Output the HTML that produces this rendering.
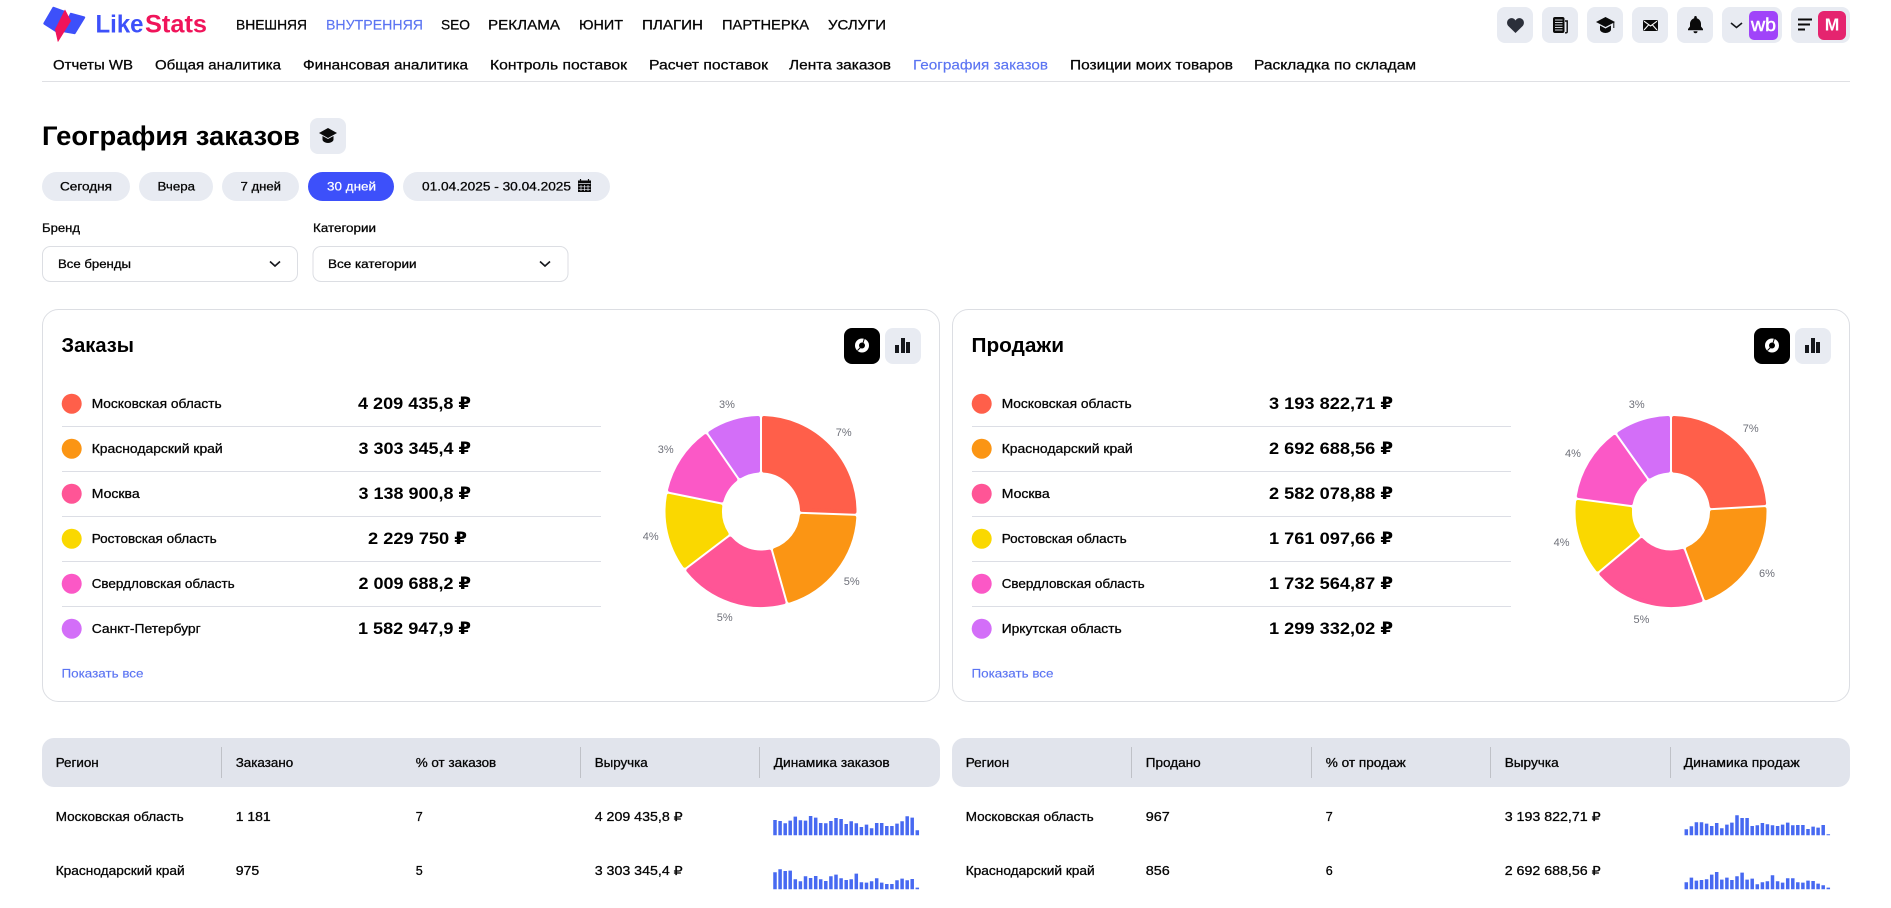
<!DOCTYPE html>
<html lang="ru"><head><meta charset="utf-8"><title>География заказов</title>
<style>
html,body{margin:0;padding:0;background:#fff;width:1891px;height:908px;overflow:hidden}
svg{display:block;font-family:"Liberation Sans","DejaVu Sans",sans-serif}
.m{fill:#050505;stroke:#050505;stroke-width:.28px}
.b{font-weight:700;fill:#000}
.n{font-size:14px}.s{font-size:12px}.r{font-size:12.5px}.a{font-size:16.5px}
.l{fill:#5b74f2;stroke:#5b74f2;stroke-width:.15px}
.p{font-size:11px;fill:#6e7079;text-anchor:middle}
.sp{fill:none;stroke:#4769f1;stroke-width:3.5}
.bt{fill:#e8ebf2}
</style></head><body>
<svg width="1891" height="908" viewBox="0 0 1891 908" xmlns="http://www.w3.org/2000/svg">
<!-- logo -->
<g stroke-linejoin="round">
<path d="M53.5 8 L44.5 23.5 L57 31.500 L64.5 12 Z" fill="#3d50fa" stroke="#3d50fa" stroke-width="2.4"/>
<path d="M71 14 L84 17.5 L74.5 33 L63 31 Z" fill="#3d50fa" stroke="#3d50fa" stroke-width="2.4"/>
<path d="M65 10 L70.7 21 L58 41.5 L55.3 29.5 Z" fill="#f0145a" stroke="#f0145a" stroke-width=".6"/>
</g>
<text x="95.500" y="32.7" font-size="25" font-weight="700" fill="#3d50fa" textLength="48" lengthAdjust="spacingAndGlyphs">Like</text>
<text x="145" y="32.7" font-size="25" font-weight="700" fill="#f0145a" textLength="62" lengthAdjust="spacingAndGlyphs">Stats</text>
<!-- top nav -->
<g class="n" transform="translate(0 -.4)">
<text class="m" x="236" y="30" textLength="71" lengthAdjust="spacingAndGlyphs">ВНЕШНЯЯ</text>
<text class="l" x="326" y="30" textLength="97" lengthAdjust="spacingAndGlyphs">ВНУТРЕННЯЯ</text>
<text class="m" x="441" y="30" textLength="29" lengthAdjust="spacingAndGlyphs">SEO</text>
<text class="m" x="488" y="30" textLength="72" lengthAdjust="spacingAndGlyphs">РЕКЛАМА</text>
<text class="m" x="579" y="30" textLength="44" lengthAdjust="spacingAndGlyphs">ЮНИТ</text>
<text class="m" x="642" y="30" textLength="61" lengthAdjust="spacingAndGlyphs">ПЛАГИН</text>
<text class="m" x="722" y="30" textLength="87" lengthAdjust="spacingAndGlyphs">ПАРТНЕРКА</text>
<text class="m" x="828" y="30" textLength="58" lengthAdjust="spacingAndGlyphs">УСЛУГИ</text>
<text class="m" x="53" y="70" textLength="80" lengthAdjust="spacingAndGlyphs">Отчеты WB</text>
<text class="m" x="155" y="70" textLength="126" lengthAdjust="spacingAndGlyphs">Общая аналитика</text>
<text class="m" x="303" y="70" textLength="165" lengthAdjust="spacingAndGlyphs">Финансовая аналитика</text>
<text class="m" x="490" y="70" textLength="137" lengthAdjust="spacingAndGlyphs">Контроль поставок</text>
<text class="m" x="649" y="70" textLength="119" lengthAdjust="spacingAndGlyphs">Расчет поставок</text>
<text class="m" x="789" y="70" textLength="102" lengthAdjust="spacingAndGlyphs">Лента заказов</text>
<text class="l" x="913" y="70" textLength="135" lengthAdjust="spacingAndGlyphs">География заказов</text>
<text class="m" x="1070" y="70" textLength="163" lengthAdjust="spacingAndGlyphs">Позиции моих товаров</text>
<text class="m" x="1254" y="70" textLength="162" lengthAdjust="spacingAndGlyphs">Раскладка по складам</text>
</g>
<rect x="42" y="81" width="1808" height="1" fill="#dfe0e4"/>
<!-- top right buttons -->
<rect class="bt" x="1497" y="7" width="36" height="36" rx="8"/>
<rect class="bt" x="1542" y="7" width="36" height="36" rx="8"/>
<rect class="bt" x="1587" y="7" width="36" height="36" rx="8"/>
<rect class="bt" x="1632" y="7" width="36" height="36" rx="8"/>
<rect class="bt" x="1677" y="7" width="36" height="36" rx="8"/>
<rect class="bt" x="1722" y="7" width="60" height="36" rx="8"/>
<rect class="bt" x="1791" y="7" width="59" height="36" rx="8"/>
<path transform="translate(1507 18)" fill="#2b2f3a" d="M8.5 15 L1.3 8 C-1 5.5 0 1.2 3.5.3 C5.5 -.2 7.5.7 8.5 2.5 C9.5.7 11.5-.2 13.5.3 C17 1.2 18 5.5 15.7 8 Z"/>
<rect x="1553" y="17" width="11.5" height="16" rx="2" fill="#0a0a0a"/>
<path d="M1555 20h7.5M1555 22.5h7.5M1555 25h7.5M1555 27.5h7.5M1555 30h7.5" stroke="#cfd2d8" stroke-width="1.1"/>
<path d="M1565 21h2.2v10.800q0 1-1 1h-1.2" fill="none" stroke="#0a0a0a" stroke-width="1.4"/>
<g fill="#0a0a0a"><path d="M1596 22 L1605.5 17 L1615 22 L1605.5 27 Z"/><path d="M1600 25.5v4c0 2 3 3.5 5.5 3.5s5.5-1.5 5.5-3.5v-4L1605.5 28.500 Z"/><path d="M1613.8 22.5v5.5" stroke="#0a0a0a" stroke-width="1"/></g>
<rect x="1643" y="20" width="15" height="11" rx="1.5" fill="#0a0a0a"/>
<path d="M1644 21.2 L1650.5 26 L1657 21.2 M1644 30 L1648.5 25 M1657 30 L1652.5 25" fill="none" stroke="#fff" stroke-width="1.1"/>
<path fill="#0a0a0a" d="M1695.5 16c-.8 0-1.3.6-1.3 1.3v.9C1691.5 19 1690 21.3 1690 24v2.5L1688 29v1.2h15V29L1701 26.5V24c0-2.7-1.5-5-4.2-5.8v-.9c0-.7-.5-1.3-1.3-1.3ZM1693.500 31.200a2 2 0 0 0 4 0Z"/>
<path d="M1731 23 L1736.5 27.5 L1742 23" fill="none" stroke="#15171c" stroke-width="1.6"/>
<rect x="1749" y="11" width="29" height="29" rx="5" fill="#a044f9"/>
<text x="1763.5" y="31" font-size="18" fill="#fff" stroke="#fff" stroke-width=".5" text-anchor="middle" textLength="25" lengthAdjust="spacingAndGlyphs">wb</text>
<path d="M1798 19.5h14M1798 24.5h12M1798 29.5h7" stroke="#0a0a0a" stroke-width="2.1"/>
<rect x="1818" y="11" width="28" height="29" rx="6" fill="#e5246f"/>
<text x="1832" y="30.5" font-size="17.5" font-weight="700" fill="#fff" text-anchor="middle">M</text>
<!-- heading -->
<text class="b" x="42" y="145" font-size="26.5" textLength="258" lengthAdjust="spacingAndGlyphs">География заказов</text>
<rect class="bt" x="310" y="118" width="36" height="36" rx="8"/>
<g fill="#0a0a0a"><path d="M319 133 L328 128 L337 133 L328 138 Z"/><path d="M322.5 136v3.500c0 2 3 3.500 5.500 3.500s5.500-1.500 5.500-3.500V136L328 139 Z"/></g>
<!-- pills -->
<rect class="bt" x="42" y="172" width="88" height="29" rx="14.5"/>
<rect class="bt" x="139" y="172" width="74" height="29" rx="14.5"/>
<rect class="bt" x="222" y="172" width="77" height="29" rx="14.5"/>
<rect x="308" y="172" width="86" height="29" rx="14.5" fill="#3d50fa"/>
<rect class="bt" x="403" y="172" width="207" height="29" rx="14.5"/>
<g class="s">
<text class="m" x="60" y="190.5" textLength="52" lengthAdjust="spacingAndGlyphs">Сегодня</text>
<text class="m" x="157.5" y="190.5" textLength="37.5" lengthAdjust="spacingAndGlyphs">Вчера</text>
<text class="m" x="240.5" y="190.5" textLength="40.5" lengthAdjust="spacingAndGlyphs">7 дней</text>
<text x="327" y="190.5" fill="#fff" stroke="#fff" stroke-width=".22" textLength="49" lengthAdjust="spacingAndGlyphs">30 дней</text>
<text class="m" x="422" y="190.5" textLength="149" lengthAdjust="spacingAndGlyphs">01.04.2025 - 30.04.2025</text>
</g>
<path d="M578 180.5h13v11.500h-13z" fill="#0a0a0a"/>
<path d="M580.5 179v2M588.5 179v2" stroke="#0a0a0a" stroke-width="1.2"/>
<path d="M578.5 183.5h12M581 185v6M584.5 185v6M588 185v6M578.5 186.8h12M578.5 189.3h12" stroke="#e8ebf2" stroke-width=".7"/>
<!-- filters -->
<rect x="42.5" y="246.5" width="255" height="35" rx="8" fill="#fff" stroke="#dcdee3"/>
<rect x="313" y="246.5" width="255" height="35" rx="8" fill="#fff" stroke="#dcdee3"/>
<g class="s" transform="translate(0 -.5)">
<text class="m" x="42" y="232.5" textLength="38" lengthAdjust="spacingAndGlyphs">Бренд</text>
<text class="m" x="313" y="232.5" textLength="63" lengthAdjust="spacingAndGlyphs">Категории</text>
<text class="m" x="58" y="268.5" textLength="73" lengthAdjust="spacingAndGlyphs">Все бренды</text>
<text class="m" x="328" y="268.5" textLength="88.5" lengthAdjust="spacingAndGlyphs">Все категории</text>
</g>
<path d="M270 261.5 L275 266 L280 261.5" fill="none" stroke="#15171c" stroke-width="1.6"/>
<path d="M540 261.5 L545 266 L550 261.5" fill="none" stroke="#15171c" stroke-width="1.6"/>
<!-- cards -->
<rect x="42.5" y="309.5" width="897" height="392" rx="16" fill="#fff" stroke="#dcdee3"/>
<rect x="952.5" y="309.5" width="897" height="392" rx="16" fill="#fff" stroke="#dcdee3"/>
<text class="b" x="61.5" y="352" font-size="20" textLength="72.5" lengthAdjust="spacingAndGlyphs">Заказы</text>
<text class="b" x="971.5" y="352" font-size="20" textLength="92.5" lengthAdjust="spacingAndGlyphs">Продажи</text>
<!-- toggles -->
<rect x="844" y="328" width="36" height="36" rx="8" fill="#000"/>
<rect class="bt" x="885" y="328" width="36" height="36" rx="8"/>
<circle cx="862" cy="345.5" r="5" fill="none" stroke="#fff" stroke-width="4"/>
<path d="M863 343 L864.500 338 M860.500 347.500 L857.500 350.500" stroke="#000" stroke-width="1"/>
<path d="M895 345h4v8h-4zM901 338h4v15h-4zM906 342h4v11h-4z" fill="#15171c"/>
<rect x="1754" y="328" width="36" height="36" rx="8" fill="#000"/>
<rect class="bt" x="1795" y="328" width="36" height="36" rx="8"/>
<circle cx="1772" cy="345.5" r="5" fill="none" stroke="#fff" stroke-width="4"/>
<path d="M1773 343 L1774.500 338 M1770.500 347.500 L1767.500 350.500" stroke="#000" stroke-width="1"/>
<path d="M1805 345h4v8h-4zM1811 338h4v15h-4zM1816 342h4v11h-4z" fill="#15171c"/>
<!-- left list -->
<g>
<g transform="translate(-.3 -.3)"><circle cx="72" cy="404" r="10" fill="#ff5f4a"/><circle cx="72" cy="449" r="10" fill="#fb9514"/><circle cx="72" cy="494" r="10" fill="#ff5596"/><circle cx="72" cy="539" r="10" fill="#fad800"/><circle cx="72" cy="584" r="10" fill="#fb58c6"/><circle cx="72" cy="629" r="10" fill="#d36ef8"/></g>
<path d="M62 426.500h539M62 471.500h539M62 516.500h539M62 561.500h539M62 606.500h539" stroke="#dcdee5"/>
<g class="r" transform="translate(-.3 -.6)">
<text class="m" x="92" y="408.5" textLength="130" lengthAdjust="spacingAndGlyphs">Московская область</text>
<text class="m" x="92" y="453.5" textLength="131" lengthAdjust="spacingAndGlyphs">Краснодарский край</text>
<text class="m" x="92" y="498.5" textLength="48" lengthAdjust="spacingAndGlyphs">Москва</text>
<text class="m" x="92" y="543.5" textLength="125" lengthAdjust="spacingAndGlyphs">Ростовская область</text>
<text class="m" x="92" y="588.5" textLength="143" lengthAdjust="spacingAndGlyphs">Свердловская область</text>
<text class="m" x="92" y="633.5" textLength="109" lengthAdjust="spacingAndGlyphs">Санкт-Петербург</text>
</g>
<g class="a b" transform="translate(0 -.5)">
<text x="358" y="409.3" textLength="113" lengthAdjust="spacingAndGlyphs">4 209 435,8 ₽</text>
<text x="358.5" y="454.3" textLength="112.5" lengthAdjust="spacingAndGlyphs">3 303 345,4 ₽</text>
<text x="358.5" y="499.3" textLength="112.5" lengthAdjust="spacingAndGlyphs">3 138 900,8 ₽</text>
<text x="368" y="544.3" textLength="99" lengthAdjust="spacingAndGlyphs">2 229 750 ₽</text>
<text x="358.5" y="589.3" textLength="112.5" lengthAdjust="spacingAndGlyphs">2 009 688,2 ₽</text>
<text x="358" y="634.3" textLength="113" lengthAdjust="spacingAndGlyphs">1 582 947,9 ₽</text>
</g>
<text class="s l" x="61.5" y="677.5" textLength="82" lengthAdjust="spacingAndGlyphs">Показать все</text>
</g>
<!-- right list -->
<g>
<g transform="translate(-.3 -.3)"><circle cx="982" cy="404" r="10" fill="#ff5f4a"/><circle cx="982" cy="449" r="10" fill="#fb9514"/><circle cx="982" cy="494" r="10" fill="#ff5596"/><circle cx="982" cy="539" r="10" fill="#fad800"/><circle cx="982" cy="584" r="10" fill="#fb58c6"/><circle cx="982" cy="629" r="10" fill="#d36ef8"/></g>
<path d="M972 426.500h539M972 471.500h539M972 516.500h539M972 561.500h539M972 606.500h539" stroke="#dcdee5"/>
<g class="r" transform="translate(-.3 -.6)">
<text class="m" x="1002" y="408.5" textLength="130" lengthAdjust="spacingAndGlyphs">Московская область</text>
<text class="m" x="1002" y="453.5" textLength="131" lengthAdjust="spacingAndGlyphs">Краснодарский край</text>
<text class="m" x="1002" y="498.5" textLength="48" lengthAdjust="spacingAndGlyphs">Москва</text>
<text class="m" x="1002" y="543.5" textLength="125" lengthAdjust="spacingAndGlyphs">Ростовская область</text>
<text class="m" x="1002" y="588.5" textLength="143" lengthAdjust="spacingAndGlyphs">Свердловская область</text>
<text class="m" x="1002" y="633.5" textLength="120" lengthAdjust="spacingAndGlyphs">Иркутская область</text>
</g>
<g class="a b" transform="translate(0 -.5)">
<text x="1269" y="409.3" textLength="124" lengthAdjust="spacingAndGlyphs">3 193 822,71 ₽</text>
<text x="1269" y="454.3" textLength="124" lengthAdjust="spacingAndGlyphs">2 692 688,56 ₽</text>
<text x="1269" y="499.3" textLength="124" lengthAdjust="spacingAndGlyphs">2 582 078,88 ₽</text>
<text x="1269" y="544.3" textLength="124" lengthAdjust="spacingAndGlyphs">1 761 097,66 ₽</text>
<text x="1269" y="589.3" textLength="124" lengthAdjust="spacingAndGlyphs">1 732 564,87 ₽</text>
<text x="1269" y="634.3" textLength="124" lengthAdjust="spacingAndGlyphs">1 299 332,02 ₽</text>
</g>
<text class="s l" x="971.5" y="677.5" textLength="82" lengthAdjust="spacingAndGlyphs">Показать все</text>
</g>
<!-- donut 1 -->
<g transform="translate(761 511.500)" stroke-width="4" stroke-linejoin="round">
<path fill="#ff5f4a" stroke="#ff5f4a" d="M3,-93.45A93.5,93.5 0 0 1 93.49,.26L40.98,-1.57A41,41 0 0 0 3,-40.9Z"/>
<path fill="#fb9514" stroke="#fb9514" d="M93.29,6.26A93.5,93.5 0 0 1 28.34,89.1L14.03,38.53A41,41 0 0 0 40.78,4.43Z"/>
<path fill="#ff5596" stroke="#ff5596" d="M22.56,90.74A93.5,93.5 0 0 1 -72.62,58.89L-30.77,27.12A41,41 0 0 0 8.25,40.17Z"/>
<path fill="#fad800" stroke="#fad800" d="M-76.24,54.11A93.5,93.5 0 0 1 -92.17,-15.69L-40.68,-5.22A41,41 0 0 0 -34.39,22.34Z"/>
<path fill="#fb58c6" stroke="#fb58c6" d="M-90.97,-21.57A93.5,93.5 0 0 1 -55.53,-75.22L-25.69,-31.96A41,41 0 0 0 -39.48,-11.1Z"/>
<path fill="#d36ef8" stroke="#d36ef8" d="M-50.59,-78.62A93.5,93.5 0 0 1 -3,-93.45L-3,-40.9A41,41 0 0 0 -20.75,-35.36Z"/>
</g>
<text class="p" x="727" y="408">3%</text>
<text class="p" x="843.7" y="436">7%</text>
<text class="p" x="665.7" y="453">3%</text>
<text class="p" x="650.7" y="540">4%</text>
<text class="p" x="851.7" y="585">5%</text>
<text class="p" x="724.7" y="621">5%</text>
<!-- donut 2 -->
<g transform="translate(1671 511.500)" stroke-width="4" stroke-linejoin="round">
<path fill="#ff5f4a" stroke="#ff5f4a" d="M3,-93.45A93.5,93.5 0 0 1 93.12,-8.37L40.66,-5.35A41,41 0 0 0 3,-40.9Z"/>
<path fill="#fb9514" stroke="#fb9514" d="M93.46,-2.39A93.5,93.5 0 0 1 35.09,86.66L16.94,37.34A41,41 0 0 0 41,.63Z"/>
<path fill="#ff5596" stroke="#ff5596" d="M29.45,88.74A93.5,93.5 0 0 1 -69.55,62.48L-29.35,28.63A41,41 0 0 0 11.3,39.42Z"/>
<path fill="#fad800" stroke="#fad800" d="M-73.41,57.9A93.5,93.5 0 0 1 -93.01,-9.55L-40.93,-2.51A41,41 0 0 0 -33.21,24.05Z"/>
<path fill="#fb58c6" stroke="#fb58c6" d="M-92.21,-15.49A93.5,93.5 0 0 1 -56.45,-74.53L-26.09,-31.65A41,41 0 0 0 -40.13,-8.45Z"/>
<path fill="#d36ef8" stroke="#d36ef8" d="M-51.55,-77.99A93.5,93.5 0 0 1 -3,-93.45L-3,-40.9A41,41 0 0 0 -21.19,-35.11Z"/>
</g>
<text class="p" x="1636.7" y="408">3%</text>
<text class="p" x="1750.7" y="432">7%</text>
<text class="p" x="1573" y="457">4%</text>
<text class="p" x="1561.6" y="546">4%</text>
<text class="p" x="1767" y="577">6%</text>
<text class="p" x="1641.5" y="623">5%</text>
<!-- table 1 -->
<rect x="42" y="738" width="898" height="49" rx="12" fill="#e1e4ec"/>
<path d="M221.5 747v31M580.5 747v31M759.5 747v31" stroke="#bfc1c7"/>
<g class="r" transform="translate(-.3 -.5)">
<text class="m" x="56" y="767.5" textLength="43" lengthAdjust="spacingAndGlyphs">Регион</text>
<text class="m" x="236" y="767.5" textLength="57.5" lengthAdjust="spacingAndGlyphs">Заказано</text>
<text class="m" x="416" y="767.5" textLength="80.5" lengthAdjust="spacingAndGlyphs">% от заказов</text>
<text class="m" x="595" y="767.5" textLength="53" lengthAdjust="spacingAndGlyphs">Выручка</text>
<text class="m" x="774" y="767.5" textLength="116" lengthAdjust="spacingAndGlyphs">Динамика заказов</text>
<text class="m" x="56" y="821.5" textLength="128" lengthAdjust="spacingAndGlyphs">Московская область</text>
<text class="m" x="236" y="821.5" textLength="35" lengthAdjust="spacingAndGlyphs">1 181</text>
<text class="m" x="416" y="821.5">7</text>
<text class="m" x="595" y="821.5" textLength="88" lengthAdjust="spacingAndGlyphs">4 209 435,8 ₽</text>
<text class="m" x="56" y="875.5" textLength="129" lengthAdjust="spacingAndGlyphs">Краснодарский край</text>
<text class="m" x="236" y="875.5" textLength="23.5" lengthAdjust="spacingAndGlyphs">975</text>
<text class="m" x="416" y="875.5">5</text>
<text class="m" x="595" y="875.5" textLength="88" lengthAdjust="spacingAndGlyphs">3 303 345,4 ₽</text>
</g>
<path class="sp" d="M775 835.3v-15.3M780.1 835.3v-14.3M785.2 835.3v-12M790.2 835.3v-14.7M795.3 835.3v-18.7M800.4 835.3v-15M805.5 835.3v-14.7M810.6 835.3v-19.3M815.7 835.3v-17.7M820.7 835.3v-12.3M825.8 835.3v-12M830.9 835.3v-14.3M836 835.3v-17.3M841.1 835.3v-16.3M846.2 835.3v-11.3M851.2 835.3v-14M856.3 835.3v-12M861.4 835.3v-8.3M866.5 835.3v-10.7M871.6 835.3v-7M876.7 835.3v-12.3M881.7 835.3v-12.3M886.8 835.3v-9.3M891.9 835.3v-9.3M897 835.3v-11.7M902.1 835.3v-14M907.2 835.3v-19M912.2 835.3v-17.7M917.3 835.3v-5"/>
<path class="sp" d="M775 889.3v-17M780.1 889.3v-20M785.2 889.3v-18.3M790.2 889.3v-18.7M795.3 889.3v-10M800.4 889.3v-8M805.5 889.3v-13M810.6 889.3v-11.3M815.7 889.3v-13.3M820.7 889.3v-10M825.8 889.3v-8.3M830.9 889.3v-13M836 889.3v-14.7M841.1 889.3v-11M846.2 889.3v-9.3M851.2 889.3v-10M856.3 889.3v-15.7M861.4 889.3v-7M866.5 889.3v-6.7M871.6 889.3v-8M876.7 889.3v-11M881.7 889.3v-6.7M886.8 889.3v-5.3M891.9 889.3v-5.3M897 889.3v-9M902.1 889.3v-10.7M907.2 889.3v-9M912.2 889.3v-10.3M917.3 889.3v-1.7"/>
<!-- table 2 -->
<rect x="952" y="738" width="898" height="49" rx="12" fill="#e1e4ec"/>
<path d="M1131.5 747v31M1311.5 747v31M1490.5 747v31M1670.5 747v31" stroke="#bfc1c7"/>
<g class="r" transform="translate(-.3 -.5)">
<text class="m" x="966" y="767.5" textLength="43.5" lengthAdjust="spacingAndGlyphs">Регион</text>
<text class="m" x="1146" y="767.5" textLength="55" lengthAdjust="spacingAndGlyphs">Продано</text>
<text class="m" x="1326" y="767.5" textLength="80" lengthAdjust="spacingAndGlyphs">% от продаж</text>
<text class="m" x="1505" y="767.5" textLength="54" lengthAdjust="spacingAndGlyphs">Выручка</text>
<text class="m" x="1684" y="767.5" textLength="116" lengthAdjust="spacingAndGlyphs">Динамика продаж</text>
<text class="m" x="966" y="821.5" textLength="128" lengthAdjust="spacingAndGlyphs">Московская область</text>
<text class="m" x="1146" y="821.5" textLength="24" lengthAdjust="spacingAndGlyphs">967</text>
<text class="m" x="1326" y="821.5">7</text>
<text class="m" x="1505" y="821.5" textLength="96" lengthAdjust="spacingAndGlyphs">3 193 822,71 ₽</text>
<text class="m" x="966" y="875.5" textLength="129" lengthAdjust="spacingAndGlyphs">Краснодарский край</text>
<text class="m" x="1146" y="875.5" textLength="24" lengthAdjust="spacingAndGlyphs">856</text>
<text class="m" x="1326" y="875.5">6</text>
<text class="m" x="1505" y="875.5" textLength="96" lengthAdjust="spacingAndGlyphs">2 692 688,56 ₽</text>
</g>
<path class="sp" d="M1686.3 835.3v-6M1691.4 835.3v-9M1696.4 835.3v-13M1701.5 835.3v-13M1706.6 835.3v-11.7M1711.7 835.3v-9.3M1716.7 835.3v-12.3M1721.8 835.3v-7M1726.9 835.3v-10.7M1731.9 835.3v-12.7M1737 835.3v-20M1742.1 835.3v-17.3M1747.1 835.3v-17.3M1752.2 835.3v-9.3M1757.3 835.3v-10M1762.4 835.3v-12.3M1767.4 835.3v-11M1772.5 835.3v-10M1777.6 835.3v-9.3M1782.6 835.3v-10.7M1787.7 835.3v-12.7M1792.8 835.3v-10M1797.8 835.3v-10.3M1802.9 835.3v-10.3M1808 835.3v-6.3M1813.1 835.3v-8.7M1818.1 835.3v-7.7M1823.2 835.3v-10.3M1828.3 835.3v-1"/>
<path class="sp" d="M1686.3 889.3v-7M1691.4 889.3v-11.7M1696.4 889.3v-8.7M1701.5 889.3v-9.3M1706.6 889.3v-10M1711.7 889.3v-14.7M1716.7 889.3v-17.3M1721.8 889.3v-9.7M1726.9 889.3v-11.7M1731.9 889.3v-9.3M1737 889.3v-13M1742.1 889.3v-16.7M1747.1 889.3v-9.7M1752.2 889.3v-10.7M1757.3 889.3v-5M1762.4 889.3v-7M1767.4 889.3v-8M1772.5 889.3v-14M1777.6 889.3v-8M1782.6 889.3v-6.7M1787.7 889.3v-11M1792.8 889.3v-11M1797.8 889.3v-7M1802.9 889.3v-6.7M1808 889.3v-8.7M1813.1 889.3v-8.3M1818.1 889.3v-5.7M1823.2 889.3v-4M1828.3 889.3v-1.7"/>
</svg>
</body></html>
